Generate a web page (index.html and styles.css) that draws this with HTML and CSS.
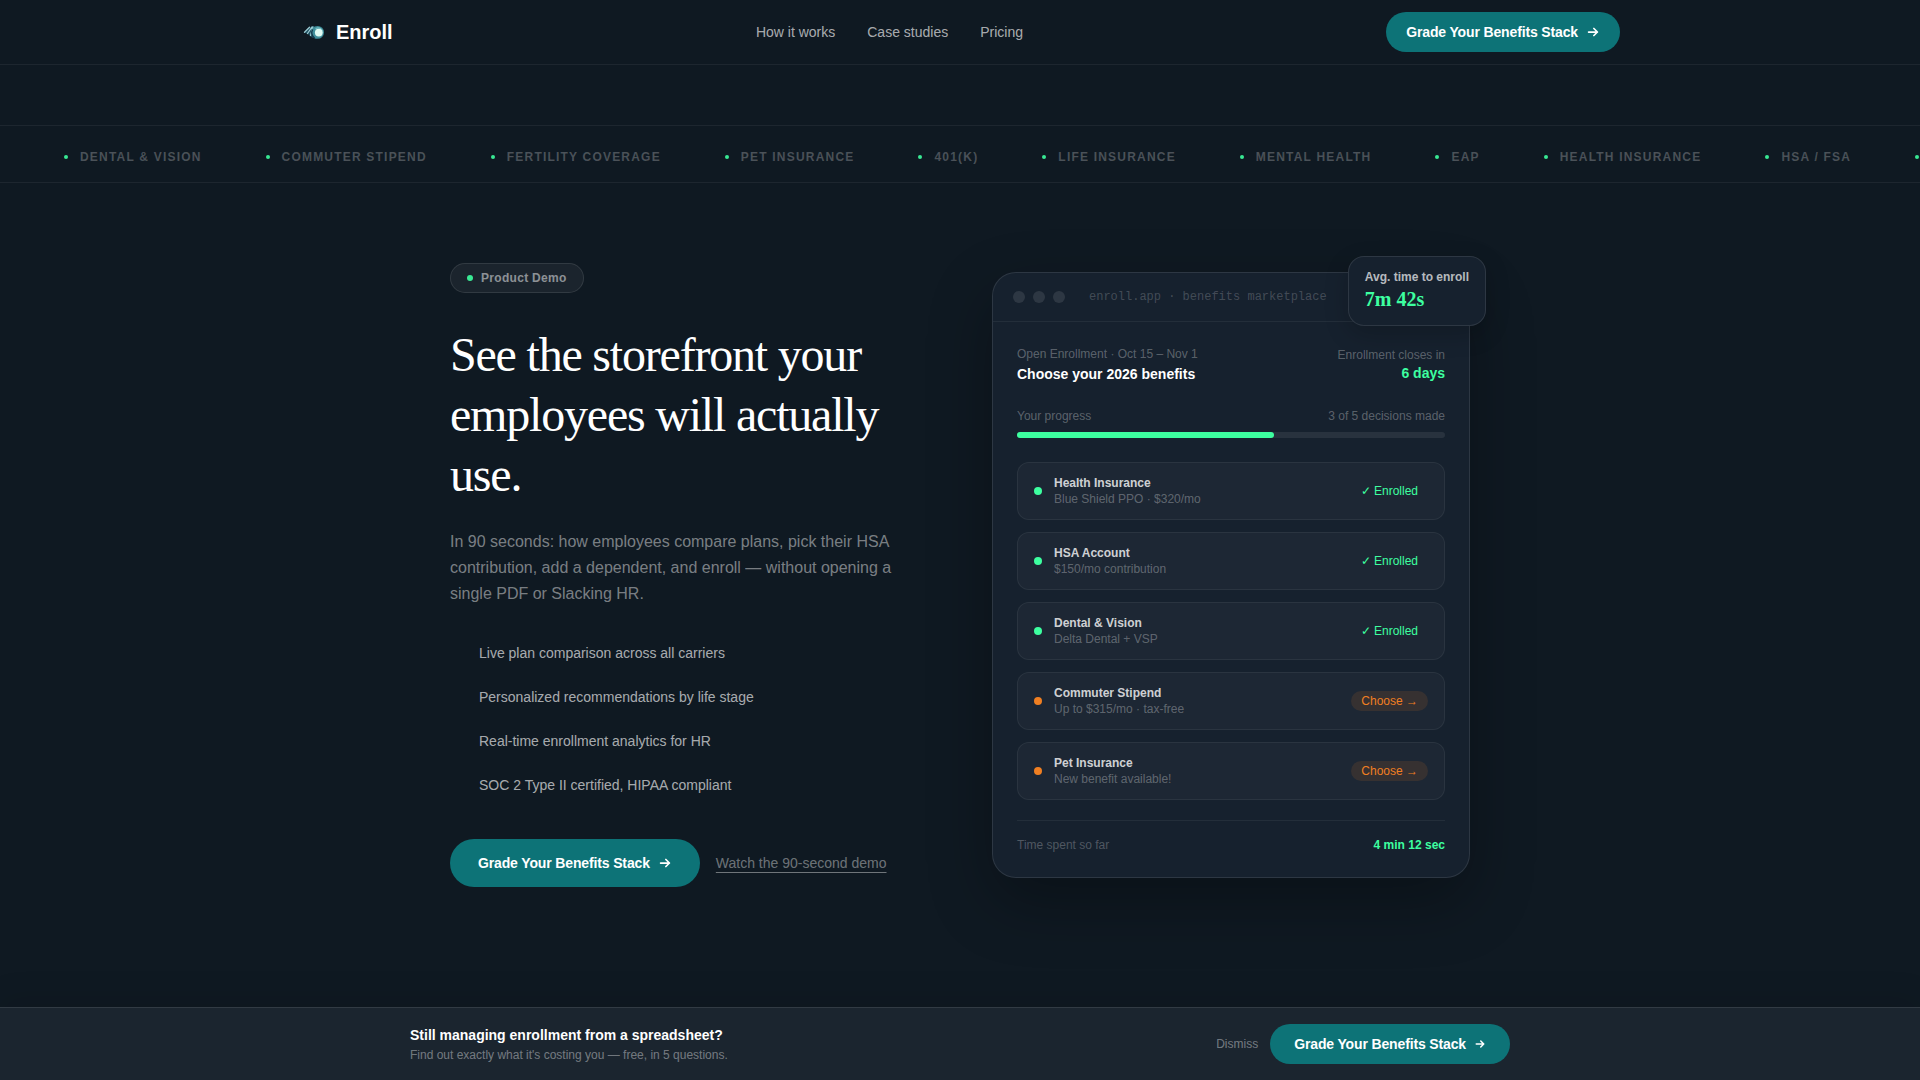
FILE: index.html
```html
<!DOCTYPE html>
<html lang="en">

<head>
  <meta charset="UTF-8">
  <meta name="viewport" content="width=device-width, initial-scale=1.0">
  <title>Enroll</title>
  <link rel="stylesheet" href="styles.css">
</head>

<body>
  <header class="nav">
    <div class="nav-inner">
      <a class="logo" href="#">
        <svg class="logo-mark" viewBox="0 4 28 28" aria-hidden="true">
          <path d="M4.500 18.500 8 14.500l4.500-2.500 4.500 1v12l-5-1.500-3.500-3z" fill="#1d4e5f" />
          <path d="M4.500 18.300 9.500 13.200M7.500 19.500l4.500-6.500M10.500 21.500l2.500-8.500" fill="none" stroke="#9ccbd3" stroke-width="1.300" stroke-linecap="round" />
          <circle cx="17.600" cy="18.400" r="6.400" fill="#3f8e9b" />
          <path d="M12.600 15.500c-1.500 3-.500 6.500 2 8.500" fill="none" stroke="#143a4c" stroke-width="1.400" />
          <circle cx="18.800" cy="18.600" r="3.900" fill="#dffaf3" />
          <path d="M15.500 14.800c2.500-1.600 5.500-.8 7 1.700" fill="none" stroke="#8fd4d6" stroke-width="1" />
        </svg>
        <span>Enroll</span>
      </a>
      <nav class="nav-links">
        <a href="#how">How it works</a>
        <a href="#cases">Case studies</a>
        <a href="#pricing">Pricing</a>
      </nav>
      <a class="btn btn-nav" href="#grade">
        Grade Your Benefits Stack
        <svg viewBox="0 0 16 16" aria-hidden="true"><path d="M3 8h10M9 4l4 4-4 4" /></svg>
      </a>
    </div>
  </header>

  <main>
    <div class="ticker">
      <ul class="ticker-track">
        <li>Dental &amp; Vision</li>
        <li>Commuter Stipend</li>
        <li>Fertility Coverage</li>
        <li>Pet Insurance</li>
        <li>401(k)</li>
        <li>Life Insurance</li>
        <li>Mental Health</li>
        <li>EAP</li>
        <li>Health Insurance</li>
        <li>HSA / FSA</li>
        <li>Dental &amp; Vision</li>
      </ul>
    </div>

    <section class="demo">
      <div class="demo-copy">
        <span class="eyebrow">Product Demo</span>
        <h1>See the storefront your employees will actually use.</h1>
        <p class="lead">In 90 seconds: how employees compare plans, pick their HSA contribution, add a dependent, and enroll — without opening a single PDF or Slacking HR.</p>
        <ul class="features">
          <li>Live plan comparison across all carriers</li>
          <li>Personalized recommendations by life stage</li>
          <li>Real-time enrollment analytics for HR</li>
          <li>SOC 2 Type II certified, HIPAA compliant</li>
        </ul>
        <div class="actions">
          <a class="btn btn-hero" href="#grade">
            Grade Your Benefits Stack
            <svg viewBox="0 0 16 16" aria-hidden="true"><path d="M3 8h10M9 4l4 4-4 4" /></svg>
          </a>
          <a class="watch" href="#demo">Watch the 90-second demo</a>
        </div>
      </div>

      <div class="card">
        <div class="card-bar">
          <i class="light"></i>
          <i class="light"></i>
          <i class="light"></i>
          <span class="url">enroll.app · benefits marketplace</span>
        </div>
        <div class="card-body">
          <div class="card-head">
            <div>
              <p class="small">Open Enrollment · Oct 15 – Nov 1</p>
              <h2>Choose your 2026 benefits</h2>
            </div>
            <div class="closes">
              <p class="small">Enrollment closes in</p>
              <p class="days">6 days</p>
            </div>
          </div>

          <div class="progress-label small">
            <span>Your progress</span>
            <span>3 of 5 decisions made</span>
          </div>
          <div class="progress">
            <div class="progress-fill" style="width: 60%"></div>
          </div>

          <ul class="benefits">
            <li class="benefit">
              <div>
                <p class="benefit-name">Health Insurance</p>
                <p class="small">Blue Shield PPO · $320/mo</p>
              </div>
              <span class="status">✓ Enrolled</span>
            </li>
            <li class="benefit">
              <div>
                <p class="benefit-name">HSA Account</p>
                <p class="small">$150/mo contribution</p>
              </div>
              <span class="status">✓ Enrolled</span>
            </li>
            <li class="benefit">
              <div>
                <p class="benefit-name">Dental &amp; Vision</p>
                <p class="small">Delta Dental + VSP</p>
              </div>
              <span class="status">✓ Enrolled</span>
            </li>
            <li class="benefit pending">
              <div>
                <p class="benefit-name">Commuter Stipend</p>
                <p class="small">Up to $315/mo · tax-free</p>
              </div>
              <button class="status" type="button">Choose →</button>
            </li>
            <li class="benefit pending">
              <div>
                <p class="benefit-name">Pet Insurance</p>
                <p class="small">New benefit available!</p>
              </div>
              <button class="status" type="button">Choose →</button>
            </li>
          </ul>

          <div class="card-foot">
            <span>Time spent so far</span>
            <strong>4 min 12 sec</strong>
          </div>
        </div>

        <div class="float">
          <p class="float-label">Avg. time to enroll</p>
          <p class="float-value">7m 42s</p>
        </div>
      </div>
    </section>
  </main>

  <aside class="sticky">
    <div class="sticky-inner">
      <div>
        <p class="sticky-title">Still managing enrollment from a spreadsheet?</p>
        <p class="sticky-sub">Find out exactly what it's costing you — free, in 5 questions.</p>
      </div>
      <div class="sticky-actions">
        <button class="dismiss" type="button">Dismiss</button>
        <a class="btn btn-sticky" href="#grade">
          Grade Your Benefits Stack
          <svg viewBox="0 0 16 16" aria-hidden="true"><path d="M3 8h10M9 4l4 4-4 4" /></svg>
        </a>
      </div>
    </div>
  </aside>
</body>

</html>
```
FILE: styles.css
```css
*,
*::before,
*::after {
  box-sizing: border-box;
}
:root {
  --bg: #0f1922;
  --panel: #16212e;
  --teal: #0d7377;
  --mint: #3dffa0;
  --orange: #f07f22;
}
body {
  display: flex;
  flex-direction: column;
  min-height: 100vh;
  margin: 0;
  background: var(--bg);
  color: #fff;
  font-family: "Liberation Sans", Arial, sans-serif;
  font-size: 14px;
  line-height: 20px;
}
h1,
h2,
p,
ul {
  margin: 0;
  padding: 0;
}
ul {
  list-style: none;
}
a {
  color: inherit;
  text-decoration: none;
}
button {
  border: 0;
  background: none;
  color: inherit;
  font: inherit;
  cursor: pointer;
}

/* Buttons */
.btn {
  display: inline-flex;
  align-items: center;
  gap: 8px;
  height: 40px;
  border-radius: 24px;
  background: var(--teal);
  font-weight: bold;
  letter-spacing: -.01em;
  white-space: nowrap;
}
.btn svg {
  width: 14px;
  height: 14px;
  fill: none;
  stroke: currentColor;
  stroke-width: 2;
  stroke-linecap: round;
  stroke-linejoin: round;
}
.btn-nav {
  padding: 0 20px;
}
.btn-hero {
  height: 48px;
  padding: 0 28px;
}
.btn-sticky {
  padding: 0 24px;
}
.btn-sticky svg {
  width: 12px;
  height: 12px;
}

/* Nav */
.nav {
  border-bottom: 1px solid rgba(255, 255, 255, .06);
}
.nav-inner {
  display: flex;
  align-items: center;
  justify-content: space-between;
  max-width: 1320px;
  height: 64px;
  margin: 0 auto;
}
.logo {
  display: flex;
  align-items: center;
  gap: 8px;
  font-size: 20px;
  font-weight: bold;
}
.logo-mark {
  width: 28px;
  height: 28px;
}
.nav-links {
  display: flex;
  gap: 32px;
  color: rgba(255, 255, 255, .65);
}

/* Ticker */
.ticker {
  overflow: hidden;
  margin-top: 60px;
  padding: 21px 0 15px;
  border-top: 1px solid rgba(255, 255, 255, .06);
  border-bottom: 1px solid rgba(255, 255, 255, .06);
}
.ticker-track {
  display: flex;
  gap: 64px;
  padding-left: 64px;
  color: rgba(255, 255, 255, .25);
  font-size: 12px;
  font-weight: bold;
  letter-spacing: .1em;
  text-transform: uppercase;
  white-space: nowrap;
}
.ticker-track li {
  display: flex;
  align-items: center;
  gap: 12px;
}
.ticker-track li::before {
  width: 4px;
  height: 4px;
  border-radius: 50%;
  background: var(--mint);
  opacity: .9;
  content: "";
}

/* Demo */
.demo {
  display: grid;
  grid-template-columns: 1fr 1fr;
  gap: 64px;
  align-items: center;
  max-width: 1020px;
  margin: 0 auto;
  padding: 80px 0;
}
.eyebrow {
  display: inline-flex;
  align-items: center;
  gap: 8px;
  height: 30px;
  padding: 0 16px;
  border: 1px solid rgba(255, 255, 255, .1);
  border-radius: 15px;
  background: rgba(255, 255, 255, .05);
  color: rgba(255, 255, 255, .5);
  font-size: 12px;
  font-weight: bold;
  letter-spacing: .025em;
  vertical-align: top;
}
.eyebrow::before {
  width: 6px;
  height: 6px;
  border-radius: 50%;
  background: var(--mint);
  opacity: .9;
  content: "";
}
h1 {
  margin: 32px 0 24px;
  font-family: "Liberation Serif", "Times New Roman", serif;
  font-size: 48px;
  font-weight: normal;
  line-height: 60px;
  letter-spacing: -.025em;
}
.lead {
  color: rgba(255, 255, 255, .45);
  font-size: 16px;
  line-height: 26px;
}
.features {
  display: grid;
  gap: 16px;
  margin: 32px 0 40px;
  padding-left: 29px;
  color: rgba(255, 255, 255, .65);
  line-height: 28px;
}
.actions {
  display: flex;
  align-items: center;
  gap: 16px;
}
.watch {
  color: rgba(255, 255, 255, .4);
  text-decoration: underline;
  text-underline-offset: 4px;
  white-space: nowrap;
}

/* Card */
.card {
  position: relative;
  border: 1px solid rgba(255, 255, 255, .1);
  border-radius: 24px;
  background: var(--panel);
  box-shadow: 0 24px 64px rgba(0, 0, 0, .3);
  font-size: 12px;
  line-height: 16px;
}
.card-bar {
  display: flex;
  align-items: center;
  gap: 8px;
  padding: 16px 20px;
  border-bottom: 1px solid rgba(255, 255, 255, .06);
}
.light {
  width: 12px;
  height: 12px;
  border-radius: 50%;
  background: rgba(255, 255, 255, .1);
}
.url {
  margin-left: 16px;
  color: rgba(255, 255, 255, .2);
  font-family: "Liberation Mono", "Courier New", monospace;
}
.card-body {
  padding: 24px;
}
.card-head {
  display: flex;
  align-items: center;
  justify-content: space-between;
  margin-bottom: 24px;
}
.small {
  color: rgba(255, 255, 255, .3);
}
h2 {
  margin-top: 2px;
  font-size: 14px;
  line-height: 20px;
}
.closes {
  text-align: right;
}
.days {
  color: var(--mint);
  font-size: 14px;
  font-weight: bold;
  line-height: 20px;
}
.progress-label {
  display: flex;
  justify-content: space-between;
  margin-bottom: 8px;
}
.progress {
  height: 6px;
  border-radius: 3px;
  background: rgba(255, 255, 255, .08);
}
.progress-fill {
  height: 100%;
  border-radius: 3px;
  background: var(--mint);
}
.benefits {
  display: grid;
  gap: 12px;
  margin: 24px 0 20px;
}
.benefit {
  display: flex;
  align-items: center;
  gap: 12px;
  padding: 12px 16px;
  border: 1px solid rgba(255, 255, 255, .06);
  border-radius: 12px;
  background: rgba(255, 255, 255, .03);
}
.benefit::before {
  width: 8px;
  height: 8px;
  border-radius: 50%;
  background: var(--mint);
  content: "";
}
.benefit-name {
  color: rgba(255, 255, 255, .8);
  font-weight: bold;
}
.status {
  margin-left: auto;
  padding: 2px 10px;
  border-radius: 10px;
  color: var(--mint);
}
.pending::before {
  background: var(--orange);
}
.pending .status {
  background: rgba(240, 127, 34, .12);
  color: var(--orange);
}
.card-foot {
  display: flex;
  justify-content: space-between;
  padding-top: 16px;
  border-top: 1px solid rgba(255, 255, 255, .06);
  color: rgba(255, 255, 255, .25);
}
.card-foot strong {
  color: var(--mint);
}
.float {
  position: absolute;
  top: -17px;
  right: -17px;
  padding: 12px 16px;
  border: 1px solid rgba(255, 255, 255, .1);
  border-radius: 16px;
  background: var(--panel);
  box-shadow: 0 8px 24px rgba(0, 0, 0, .2);
}
.float-label {
  color: rgba(255, 255, 255, .7);
  font-weight: bold;
}
.float-value {
  color: var(--mint);
  font-family: "Liberation Serif", "Times New Roman", serif;
  font-size: 20px;
  font-weight: bold;
  line-height: 28px;
}

/* Sticky bar */
.sticky {
  position: sticky;
  bottom: 0;
  margin-top: auto;
  padding: 16px 0;
  border-top: 1px solid rgba(255, 255, 255, .1);
  background: #1b252f;
  box-shadow: 0 -8px 32px rgba(0, 0, 0, .1);
}
.sticky-inner {
  display: flex;
  align-items: center;
  justify-content: space-between;
  max-width: 1100px;
  margin: 0 auto;
}
.sticky-title {
  margin-bottom: 2px;
  font-weight: bold;
}
.sticky-sub {
  color: rgba(255, 255, 255, .4);
  font-size: 12px;
  line-height: 16px;
}
.sticky-actions {
  display: flex;
  align-items: center;
  gap: 12px;
}
.dismiss {
  padding: 0;
  color: rgba(255, 255, 255, .4);
  font-size: 12px;
}
```
